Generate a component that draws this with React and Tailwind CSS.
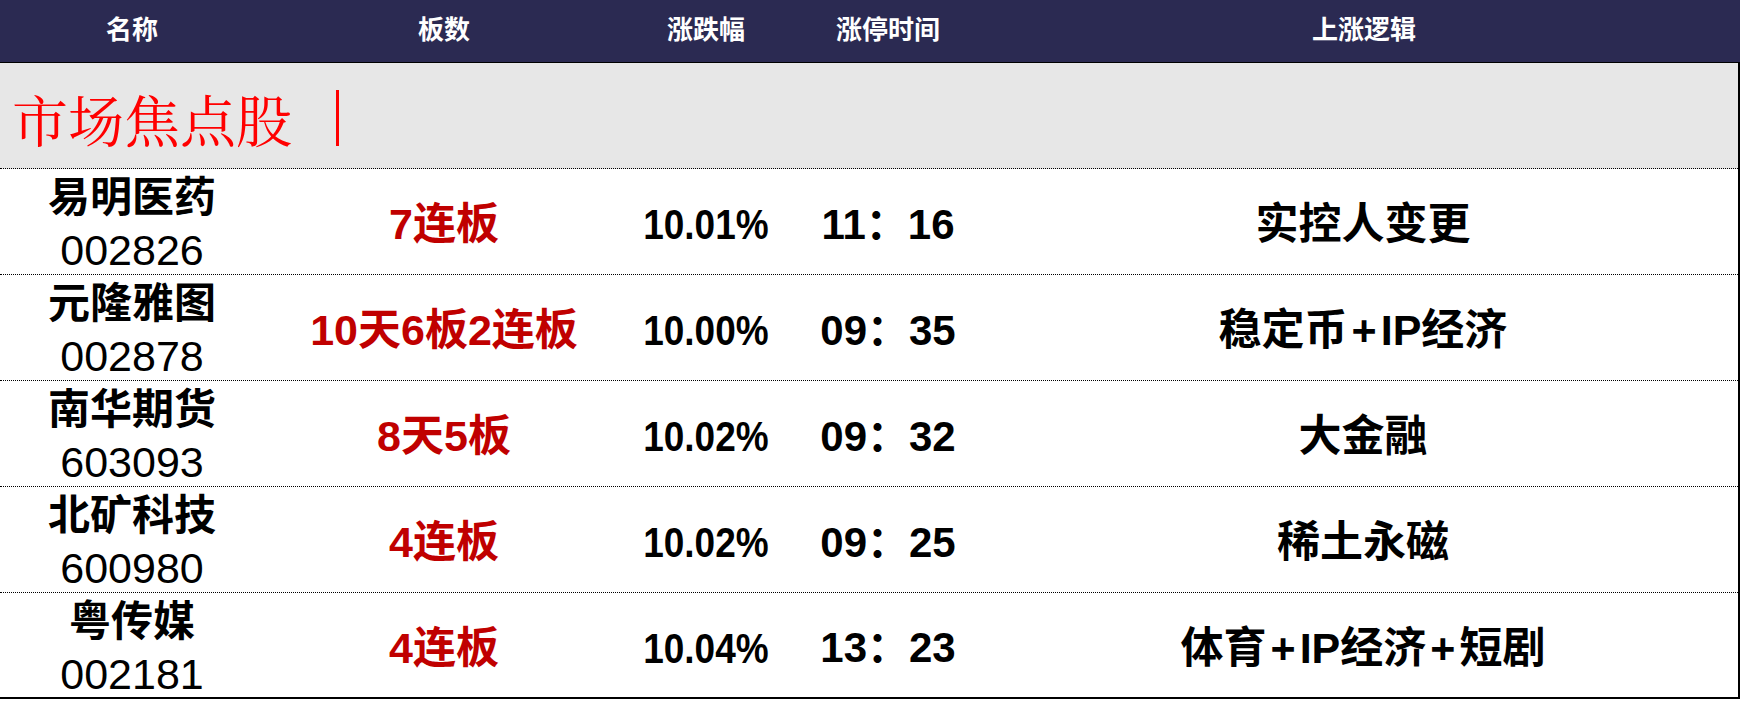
const ROWS = [
  { name: "易明医药", code: "002826", boards: "7连板", pct: "10.01%", time: "11：16", logic: "实控人变更" },
  { name: "元隆雅图", code: "002878", boards: "10天6板2连板", pct: "10.00%", time: "09：35", logic: "稳定币+IP经济" },
  { name: "南华期货", code: "603093", boards: "8天5板", pct: "10.02%", time: "09：32", logic: "大金融" },
  { name: "北矿科技", code: "600980", boards: "4连板", pct: "10.02%", time: "09：25", logic: "稀土永磁" },
  { name: "粤传媒", code: "002181", boards: "4连板", pct: "10.04%", time: "13：23", logic: "体育+IP经济+短剧" },
];

const SANS = "font-['Liberation_Sans','Noto_Sans_CJK_SC',sans-serif]";

// column widths, shared by header and rows
const COLS = ["w-[264px]", "w-[360px]", "w-[164px]", "w-[200px]", "flex-1"];

function HeaderRow() {
  const labels = ["名称", "板数", "涨跌幅", "涨停时间", "上涨逻辑"];
  return (
    <div className="flex h-[63px] bg-[#2b2a52] border-b border-black items-center pb-[3px]">
      {labels.map((l, i) => (
        <div key={l} className={`${COLS[i]} text-center text-white text-[26px] font-semibold leading-none`}>
          {l}
        </div>
      ))}
    </div>
  );
}

// the "+" in the logic text sits a little looser than the plain font gives
function Logic({ text }) {
  const parts = text.split("+");
  return parts.map((p, i) => (
    <span key={i}>
      {i > 0 && <span className="mx-[4px]">+</span>}
      {p}
    </span>
  ));
}

function StockRow({ row, last }) {
  return (
    <div
      className={`flex items-center h-[106px] ${
        last ? "border-b-2 border-solid" : "border-b border-dotted"
      } border-black`}
    >
      {/* name + code stacked */}
      <div className={`${COLS[0]} h-full flex flex-col items-center pt-[2px] text-black`}>
        <div className="text-[42px] font-semibold leading-[54px]">{row.name}</div>
        <div className="text-[43px] leading-[50px]">{row.code}</div>
      </div>
      <div className={`${COLS[1]} text-center text-[#c00000] text-[43px] font-semibold leading-none pt-[6px]`}>
        {row.boards}
      </div>
      <div className={`${COLS[2]} flex justify-center pt-[6px]`}>
        <span className="inline-block text-[43px] font-bold leading-none scale-x-[0.86]">{row.pct}</span>
      </div>
      <div className={`${COLS[3]} text-center text-[42px] font-bold leading-none pt-[6px]`}>{row.time}</div>
      <div className={`${COLS[4]} text-center text-[43px] font-bold leading-none pt-[6px]`}>
        <Logic text={row.logic} />
      </div>
    </div>
  );
}

export default function App() {
  return (
    <div className={`w-[1740px] h-[702px] bg-white ${SANS}`}>
      <HeaderRow />
      <div className="border-r-2 border-black">
        {/* section band */}
        <div className="h-[106px] bg-[#e7e7e7] border-b border-dotted border-black flex items-center pl-[12px] pt-[4px]">
          <span className="text-[#ff0000] text-[56px] leading-none font-['Noto_Serif_CJK_SC','Liberation_Serif',serif]">
            市场焦点股
          </span>
          <span className="ml-[44px] inline-block w-[3px] h-[56px] bg-[#ff0000]" />
        </div>
        {ROWS.map((r, i) => (
          <StockRow key={r.code} row={r} last={i === ROWS.length - 1} />
        ))}
      </div>
    </div>
  );
}
